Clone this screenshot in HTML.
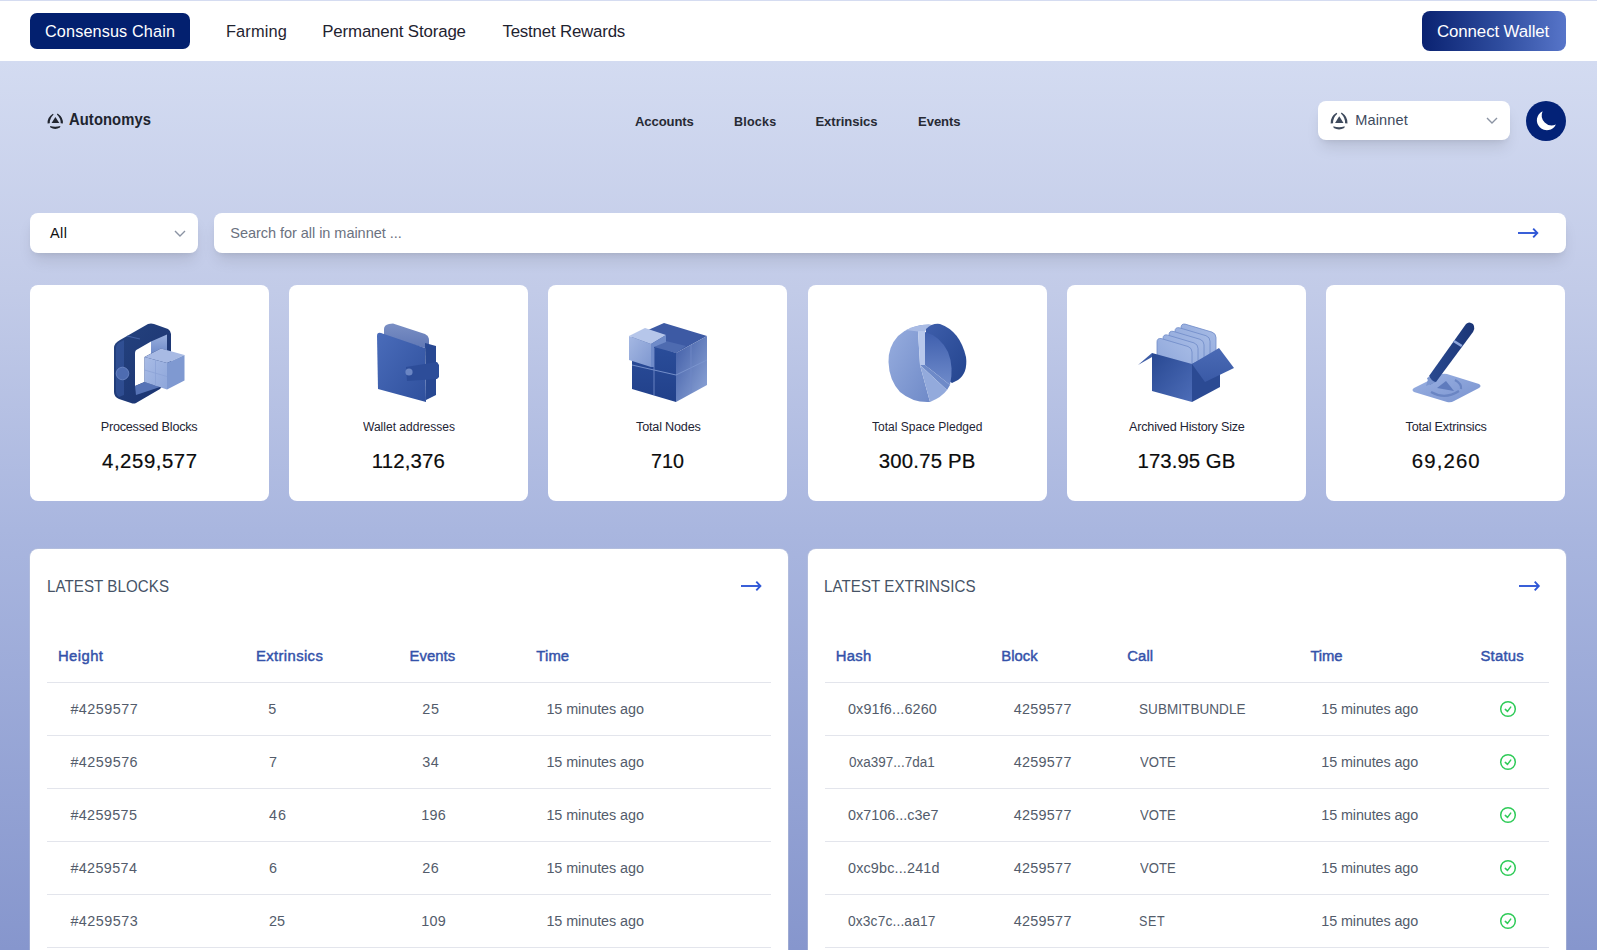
<!DOCTYPE html>
<html><head><meta charset="utf-8"><title>Autonomys Explorer</title>
<style>
*{margin:0;padding:0;box-sizing:border-box}
html,body{width:1597px;height:950px;overflow:hidden}
body{position:relative;font-family:"Liberation Sans",sans-serif;
 background:linear-gradient(180deg,#d3dbf1 0px,#d3dbf1 61px,#c2cbe8 290px,#a9b6df 530px,#8696cd 950px)}
.abs{position:absolute}
.tx{position:absolute;white-space:nowrap}
.ic{position:absolute;overflow:visible}
.topline{left:0;top:0;width:1597px;height:1px;background:#d5dcf1}
.nav{left:0;top:1px;width:1597px;height:60px;background:#fff}
.btn0{left:30px;top:13px;width:160px;height:36px;border-radius:7px;background:#03206f}
.cw{left:1422px;top:11px;width:144px;height:40px;border-radius:8px;background:linear-gradient(90deg,#0a2271 0%,#2f4d9f 55%,#5775c9 100%)}
.sel{background:#fff;border-radius:8px;box-shadow:0 10px 15px -3px rgba(0,0,0,0.1),0 4px 6px -4px rgba(0,0,0,0.1)}
.moon{left:1526px;top:101px;width:40px;height:40px;border-radius:50%;background:#032277}
.card{top:285px;width:239.17px;height:216px;background:#fff;border-radius:8px}
.panel{top:549px;width:758px;height:420px;background:#fff;border-radius:8px;box-shadow:0 0 0 1px rgba(200,205,220,0.35)}
.hl{height:1px;background:#e3e5ec}
</style></head>
<body>
<div class="abs topline"></div><div class="abs nav"></div>
<div class="abs btn0"></div><div class="abs cw"></div>
<svg class="ic" style="left:47px;top:113px" width="16" height="16" viewBox="0 0 16 16">
<path d="M0.6,10.4 Q0.2,4.2 5.9,0.7 L6.6,1.6 Q2.6,5.2 2.8,10.3 Z" fill="#20242e"/>
<path d="M15.9,10.4 Q16.3,4.2 10.6,0.4 L9.9,1.4 Q13.9,5.2 13.7,10.3 Z" fill="#20242e"/>
<path d="M3.0,13.0 Q8.2,14.6 13.4,13.0 L13.0,14.6 Q8.2,17.3 3.4,14.6 Z" fill="#20242e"/>
<path d="M8.4,3.9 L12.3,10.0 L4.6,10.0 Z" fill="#20242e"/>
</svg>
<div class="abs sel" style="left:1318px;top:101px;width:192px;height:39px"></div>
<svg class="ic" style="left:1330px;top:111.5px" width="17.6" height="17.6" viewBox="0 0 16 16">
<path d="M0.6,10.4 Q0.2,4.2 5.9,0.7 L6.6,1.6 Q2.6,5.2 2.8,10.3 Z" fill="#3e4a5d"/>
<path d="M15.9,10.4 Q16.3,4.2 10.6,0.4 L9.9,1.4 Q13.9,5.2 13.7,10.3 Z" fill="#3e4a5d"/>
<path d="M3.0,13.0 Q8.2,14.6 13.4,13.0 L13.0,14.6 Q8.2,17.3 3.4,14.6 Z" fill="#3e4a5d"/>
<path d="M8.4,3.9 L12.3,10.0 L4.6,10.0 Z" fill="#3e4a5d"/>
</svg>
<svg class="ic" style="left:1485px;top:116.3px" width="14" height="9.0" viewBox="1485 116.3 14 9.0">
<path d="M1487,118.3 L1492.0,123.3 L1497,118.3" stroke="#8b93a3" stroke-width="1.4" fill="none"/>
</svg>
<div class="abs moon"></div>
<svg class="ic" style="left:1526px;top:101px" width="40" height="40" viewBox="0 0 40 40">
<path d="M29.9,23.5 A10.1,10.1 0 0 1 16.6,10.2 A10,10 0 1 0 29.9,23.5 Z" fill="#ffffff"/></svg>
<div class="abs sel" style="left:30px;top:213px;width:168px;height:40px"></div>
<svg class="ic" style="left:173px;top:229.3px" width="14" height="9.0" viewBox="173 229.3 14 9.0">
<path d="M175,231.3 L180.0,236.3 L185,231.3" stroke="#8b93a3" stroke-width="1.4" fill="none"/>
</svg>
<div class="abs sel" style="left:214px;top:213px;width:1352px;height:40px"></div>
<svg class="ic" style="left:1517px;top:226.6px" width="21.5" height="12" viewBox="1517 226.6 21.5 12">
<path d="M1518,232.6 L1536.5,232.6" stroke="#2f57d6" stroke-width="1.9" fill="none"/>
<path d="M1533.2,228.29999999999998 L1537.3,232.6 L1533.2,236.9" stroke="#2f57d6" stroke-width="1.9" fill="none" stroke-linejoin="miter"/>
</svg>
<div class="abs card" style="left:30.00px"></div>
<div class="abs card" style="left:289.17px"></div>
<div class="abs card" style="left:548.33px"></div>
<div class="abs card" style="left:807.50px"></div>
<div class="abs card" style="left:1066.67px"></div>
<div class="abs card" style="left:1325.83px"></div>
<svg class="ic" style="left:105px;top:315px" width="90" height="95" viewBox="0 0 90 95"><defs><linearGradient id="g1a" x1="0" y1="0" x2="1" y2="0"><stop offset="0" stop-color="#2f51a0"/><stop offset="1" stop-color="#1b3473"/></linearGradient><linearGradient id="g1b" x1="0" y1="0" x2="0" y2="1"><stop offset="0" stop-color="#9ab0de"/><stop offset="1" stop-color="#6f8bc9"/></linearGradient><linearGradient id="g1c" x1="0" y1="0" x2="1" y2="1"><stop offset="0" stop-color="#a9bce6"/><stop offset="1" stop-color="#8ea6da"/></linearGradient><linearGradient id="g1d" x1="0" y1="0" x2="1" y2="1"><stop offset="0" stop-color="#25437f"/><stop offset="1" stop-color="#1a3270"/></linearGradient></defs><path d="M15,25 L43,9 Q46,8 49,9 L63,14 Q66,16 66,19 L66,60 L55,74 L31,88 Q29,89 26,88 L14,84 Q9,82 9,77 L9,33 Q9,28 15,25 Z" fill="url(#g1d)"/><path d="M11,33 Q11,29 15,27 L19,25 L19,80 L14,82 Q11,80 11,77 Z" fill="#3a5ba6" opacity="0.55"/><path d="M22,21 L35,24" stroke="#4d6bb0" stroke-width="1.2" opacity="0.8"/><path d="M30,38 Q30,35 33,34 L46,26.5 L46,38.6 L39.5,42 L39.5,67 L30,71 Z" fill="#ffffff"/><path d="M46,26.5 L62,19.5 L62,35.2 L56,33.5 L46,38.6 Z" fill="url(#g1b)"/><path d="M30,71 L39.5,67 L55,72 L31,80 Z" fill="#5673b6"/><circle cx="17.5" cy="58.5" r="6.3" fill="#4e6cb1" stroke="#6f89c6" stroke-width="0.8"/><path d="M39.5,42 L56,33.5 L79.5,40 L62,48 Z" fill="#a8bae4"/><path d="M39.5,42 L62,48 L62,74.5 L39.5,67 Z" fill="url(#g1c)"/><path d="M62,48 L79.5,40 L79.5,65.5 L62,74.5 Z" fill="#7f99d1"/><path d="M50.5,45 L50.5,71 M39.5,55 L62,61.5" stroke="#8aa1d6" stroke-width="0.7" fill="none"/></svg>
<svg class="ic" style="left:365px;top:315px" width="90" height="95" viewBox="0 0 90 95"><defs><linearGradient id="g2a" x1="0" y1="0" x2="1" y2="1"><stop offset="0" stop-color="#4a6cba"/><stop offset="1" stop-color="#2f509d"/></linearGradient><linearGradient id="g2b" x1="0" y1="0" x2="0" y2="1"><stop offset="0" stop-color="#7a8fc4"/><stop offset="1" stop-color="#5f77b5"/></linearGradient></defs><path d="M19,14 Q19,10 24,9 L28,8.5 L60,19 Q64,21 64,25 L64,34 L19,22 Z" fill="url(#g2b)"/><path d="M60,28 L71,31 L71,80 L61,85 Z" fill="#284892"/><path d="M12,21 Q12,17 16,18 L60,33 L61,87 L13,74 Z" fill="url(#g2a)"/><path d="M41,52 L72,47 L74,50 L74,62 L72,64 L42,66 Z" fill="#2d4d99"/><circle cx="44" cy="57" r="3.6" fill="#6b86c4"/></svg>
<svg class="ic" style="left:620px;top:315px" width="95" height="95" viewBox="0 0 95 95"><defs><linearGradient id="g3a" x1="0" y1="0" x2="0" y2="1"><stop offset="0" stop-color="#2c4f9c"/><stop offset="1" stop-color="#21408a"/></linearGradient><linearGradient id="g3b" x1="0" y1="0" x2="1" y2="1"><stop offset="0" stop-color="#3f5ca6"/><stop offset="1" stop-color="#90a7d8"/></linearGradient><linearGradient id="g3c" x1="0" y1="0" x2="1" y2="1"><stop offset="0" stop-color="#a5b8e3"/><stop offset="1" stop-color="#7f98d0"/></linearGradient><linearGradient id="g3d" x1="0" y1="0" x2="1" y2="1"><stop offset="0" stop-color="#2a4b97"/><stop offset="1" stop-color="#3c5aa3"/></linearGradient></defs><path d="M12,22 L44,8 L87,21 L56,38 Z" fill="#3d5aa4"/><path d="M12,22 L56,38 L56,87 L12,74 Z" fill="url(#g3a)"/><path d="M56,38 L87,21 L87,70 L56,87 Z" fill="url(#g3b)"/><path d="M34,32 L46,26 L66,31 L56,38 Z" fill="#4e6bb0"/><path d="M9,21 L25,13 L46,20 L31,29 Z" fill="#b6c6ea"/><path d="M9,21 L31,29 L31,52 L9,45 Z" fill="url(#g3c)"/><path d="M31,29 L46,20 L46,27 L34,32 L34,52 L31,52 Z" fill="#6f8bc9"/><path d="M12,50 L56,60 L87,45" stroke="#7d96cf" stroke-width="0.9" fill="none"/><path d="M34,33 L34,80 M71,30 L71,78" stroke="#6f89c6" stroke-width="0.9" fill="none"/></svg>
<svg class="ic" style="left:880px;top:315px" width="95" height="95" viewBox="0 0 95 95"><defs><linearGradient id="g4a" x1="0" y1="0" x2="1" y2="1"><stop offset="0" stop-color="#98aedf"/><stop offset="1" stop-color="#6f8ac8"/></linearGradient><linearGradient id="g4b" x1="0" y1="0" x2="1" y2="1"><stop offset="0" stop-color="#3e5eab"/><stop offset="1" stop-color="#23448e"/></linearGradient><linearGradient id="g4c" x1="0" y1="0" x2="0" y2="1"><stop offset="0" stop-color="#3f5fae"/><stop offset="1" stop-color="#6f8bca"/></linearGradient></defs><path d="M38,16 L50,9.5 Q31,9 18,21 Q8,32 8.5,47 Q9,65 20,77 Q33,88 50,87 L40,50 Z" fill="url(#g4a)"/><path d="M26,15 Q37,9.5 50,9.5 Q53,9.5 51,11.5 L45,16 L38,16.5 Z" fill="#a9bbe4"/><path d="M38,16 L45,16 L45,50 L40,50 Z" fill="#b8c8ec"/><path d="M46,14 Q52,8 60,9 Q80,16 86,42 Q88,58 78,65 L72,68 L45,50 Z" fill="url(#g4b)"/><path d="M45,17 Q60,21 68,37 Q74,52 70,70 L45,50 Z" fill="url(#g4c)"/><path d="M40,50 L45,50 L70,70 L67,75 Z" fill="#6e8ac8"/><path d="M40,50 L67,75 Q62,82 50,87 Z" fill="#93aadc"/></svg>
<svg class="ic" style="left:1135px;top:315px" width="105" height="95" viewBox="0 0 105 95"><defs><linearGradient id="g5a" x1="0" y1="0" x2="1" y2="1"><stop offset="0" stop-color="#284892"/><stop offset="1" stop-color="#4d6db8"/></linearGradient><linearGradient id="g5b" x1="0" y1="1" x2="1" y2="0"><stop offset="0" stop-color="#8aa3d9"/><stop offset="1" stop-color="#a9bde6"/></linearGradient><linearGradient id="g5f" x1="0" y1="0" x2="0" y2="1"><stop offset="0" stop-color="#4a6ab5"/><stop offset="1" stop-color="#3a5aa6"/></linearGradient></defs><path d="M46.0,45.6 L46.0,12.6 Q46.0,8.6 50.0,9.1 L77.0,17.1 Q81.0,18.6 81.0,22.6 L81.0,45.6 Z" fill="url(#g5b)" stroke="#6f8ac8" stroke-width="0.8"/><path d="M40.0,49.2 L40.0,16.2 Q40.0,12.2 44.0,12.7 L71.0,20.7 Q75.0,22.2 75.0,26.2 L75.0,49.2 Z" fill="url(#g5b)" stroke="#6f8ac8" stroke-width="0.8"/><path d="M34.0,52.8 L34.0,19.8 Q34.0,15.8 38.0,16.3 L65.0,24.3 Q69.0,25.8 69.0,29.8 L69.0,52.8 Z" fill="url(#g5b)" stroke="#6f8ac8" stroke-width="0.8"/><path d="M28.0,56.4 L28.0,23.4 Q28.0,19.4 32.0,19.9 L59.0,27.9 Q63.0,29.4 63.0,33.4 L63.0,56.4 Z" fill="url(#g5b)" stroke="#6f8ac8" stroke-width="0.8"/><path d="M22.0,60.0 L22.0,27.0 Q22.0,23.0 26.0,23.5 L53.0,31.5 Q57.0,33.0 57.0,37.0 L57.0,60.0 Z" fill="url(#g5b)" stroke="#6f8ac8" stroke-width="0.8"/><path d="M17,38 L57,49 L57,87 L17,76 Z" fill="url(#g5a)"/><path d="M57,49 L85,35 L85,72 L57,87 Z" fill="#2b4a93"/><path d="M57,49 L84,33 L99,53 L70,67 Z" fill="url(#g5f)"/><path d="M3,50 L17,38 L17,42 Z" fill="#3d5ca6"/></svg>
<svg class="ic" style="left:1400px;top:315px" width="95" height="95" viewBox="0 0 95 95"><defs><linearGradient id="g6a" x1="0" y1="0" x2="1" y2="1"><stop offset="0" stop-color="#9bb1e2"/><stop offset="1" stop-color="#7a94d0"/></linearGradient><linearGradient id="g6p" x1="0" y1="0" x2="1" y2="0"><stop offset="0" stop-color="#2a4a90"/><stop offset="1" stop-color="#1b3576"/></linearGradient></defs><path d="M14,73 Q11,75 14,77 L47,87 Q51,88 54,86 L79,73 Q82,71 79,69 L47,59 Q43,58 40,60 Z" fill="url(#g6a)"/><path d="M37,73 L46,66 L54,76 Z" fill="#5f7bbd"/><path d="M31,77 Q45,85 59,76" stroke="#6a85c3" stroke-width="2.2" fill="none"/><path d="M55,65 Q62,69 61,74" stroke="#6a85c3" stroke-width="2.2" fill="none"/><path d="M27,63 Q33,60 35,67 L30,70 Z" fill="#6d88c6"/><path d="M29,61 L66,9 Q69,6 73,9 L74,11 Q75,14 73,17 L36,67 Q32,67 29,61 Z" fill="url(#g6p)"/><path d="M53,27 L61,32 L62.5,30 L54.5,25 Z" fill="#8ea6db"/><path d="M26,71 L29,61 Q32,67 36,67 Z" fill="#7d97d0"/></svg>
<div class="abs panel" style="left:30px"></div><div class="abs panel" style="left:808px"></div>
<svg class="ic" style="left:740.2px;top:580px" width="21.59999999999991" height="12" viewBox="740.2 580 21.59999999999991 12">
<path d="M741.2,586 L759.8,586" stroke="#2f57d6" stroke-width="1.9" fill="none"/>
<path d="M756.5,581.7 L760.5999999999999,586 L756.5,590.3" stroke="#2f57d6" stroke-width="1.9" fill="none" stroke-linejoin="miter"/>
</svg>
<svg class="ic" style="left:1518px;top:580px" width="22" height="12" viewBox="1518 580 22 12">
<path d="M1519,586 L1538,586" stroke="#2f57d6" stroke-width="1.9" fill="none"/>
<path d="M1534.7,581.7 L1538.8,586 L1534.7,590.3" stroke="#2f57d6" stroke-width="1.9" fill="none" stroke-linejoin="miter"/>
</svg>
<div class="abs hl" style="left:47px;top:682px;width:724px"></div>
<div class="abs hl" style="left:825px;top:682px;width:724px"></div>
<div class="abs hl" style="left:47px;top:735px;width:724px"></div>
<div class="abs hl" style="left:825px;top:735px;width:724px"></div>
<div class="abs hl" style="left:47px;top:788px;width:724px"></div>
<div class="abs hl" style="left:825px;top:788px;width:724px"></div>
<div class="abs hl" style="left:47px;top:841px;width:724px"></div>
<div class="abs hl" style="left:825px;top:841px;width:724px"></div>
<div class="abs hl" style="left:47px;top:894px;width:724px"></div>
<div class="abs hl" style="left:825px;top:894px;width:724px"></div>
<div class="abs hl" style="left:47px;top:947px;width:724px"></div>
<div class="abs hl" style="left:825px;top:947px;width:724px"></div>
<svg class="ic" style="left:1499px;top:700px" width="18" height="18" viewBox="1499 700 18 18">
<circle cx="1508" cy="709" r="7.3" stroke="#2fcb58" stroke-width="1.5" fill="none"/>
<path d="M1505.3,709.4 L1507.5,711.4 L1510.7,707.1" stroke="#2fcb58" stroke-width="1.5" fill="none" stroke-linecap="round" stroke-linejoin="round"/>
</svg>
<svg class="ic" style="left:1499px;top:753px" width="18" height="18" viewBox="1499 753 18 18">
<circle cx="1508" cy="762" r="7.3" stroke="#2fcb58" stroke-width="1.5" fill="none"/>
<path d="M1505.3,762.4 L1507.5,764.4 L1510.7,760.1" stroke="#2fcb58" stroke-width="1.5" fill="none" stroke-linecap="round" stroke-linejoin="round"/>
</svg>
<svg class="ic" style="left:1499px;top:806px" width="18" height="18" viewBox="1499 806 18 18">
<circle cx="1508" cy="815" r="7.3" stroke="#2fcb58" stroke-width="1.5" fill="none"/>
<path d="M1505.3,815.4 L1507.5,817.4 L1510.7,813.1" stroke="#2fcb58" stroke-width="1.5" fill="none" stroke-linecap="round" stroke-linejoin="round"/>
</svg>
<svg class="ic" style="left:1499px;top:859px" width="18" height="18" viewBox="1499 859 18 18">
<circle cx="1508" cy="868" r="7.3" stroke="#2fcb58" stroke-width="1.5" fill="none"/>
<path d="M1505.3,868.4 L1507.5,870.4 L1510.7,866.1" stroke="#2fcb58" stroke-width="1.5" fill="none" stroke-linecap="round" stroke-linejoin="round"/>
</svg>
<svg class="ic" style="left:1499px;top:912px" width="18" height="18" viewBox="1499 912 18 18">
<circle cx="1508" cy="921" r="7.3" stroke="#2fcb58" stroke-width="1.5" fill="none"/>
<path d="M1505.3,921.4 L1507.5,923.4 L1510.7,919.1" stroke="#2fcb58" stroke-width="1.5" fill="none" stroke-linecap="round" stroke-linejoin="round"/>
</svg>
<div class="tx" id="nav0" style="left:45.08px;top:23.72px;font-size:16.86px;line-height:16.86px;letter-spacing:0.130px;transform:scaleX(0.9630);transform-origin:0 0;font-weight:400;color:#ffffff">Consensus Chain</div>
<div class="tx" id="nav1" style="left:226.23px;top:23.88px;font-size:16.86px;line-height:16.86px;letter-spacing:0.128px;transform:scaleX(0.9710);transform-origin:0 0;font-weight:400;color:#1f2330">Farming</div>
<div class="tx" id="nav2" style="left:322.23px;top:23.88px;font-size:16.86px;line-height:16.86px;letter-spacing:-0.152px;font-weight:400;color:#1f2330">Permanent Storage</div>
<div class="tx" id="nav3" style="left:502.46px;top:23.88px;font-size:16.86px;line-height:16.86px;letter-spacing:-0.196px;font-weight:400;color:#1f2330">Testnet Rewards</div>
<div class="tx" id="cw" style="left:1436.99px;top:24.15px;font-size:16.86px;line-height:16.86px;letter-spacing:-0.106px;font-weight:400;color:#ffffff">Connect Wallet</div>
<div class="tx" id="logo" style="left:68.76px;top:111.89px;font-size:15.84px;line-height:15.84px;letter-spacing:0.087px;transform:scaleX(0.9341);transform-origin:0 0;font-weight:700;color:#20242e">Autonomys</div>
<div class="tx" id="h0" style="left:635.00px;top:114.58px;font-size:13.08px;line-height:13.08px;letter-spacing:-0.110px;font-weight:700;color:#272a34">Accounts</div>
<div class="tx" id="h1" style="left:733.80px;top:114.72px;font-size:13.08px;line-height:13.08px;letter-spacing:0.224px;transform:scaleX(0.9574);transform-origin:0 0;font-weight:700;color:#272a34">Blocks</div>
<div class="tx" id="h2" style="left:815.45px;top:114.58px;font-size:13.08px;line-height:13.08px;letter-spacing:-0.052px;font-weight:700;color:#272a34">Extrinsics</div>
<div class="tx" id="h3" style="left:918.07px;top:114.58px;font-size:13.08px;line-height:13.08px;letter-spacing:-0.075px;font-weight:700;color:#272a34">Events</div>
<div class="tx" id="mainnet" style="left:1355.23px;top:112.69px;font-size:14.54px;line-height:14.54px;letter-spacing:0.142px;font-weight:400;color:#3e4a5d">Mainnet</div>
<div class="tx" id="all" style="left:50.00px;top:225.69px;font-size:14.54px;line-height:14.54px;letter-spacing:0.397px;font-weight:400;color:#111111">All</div>
<div class="tx" id="ph" style="left:230.30px;top:225.69px;font-size:14.54px;line-height:14.54px;letter-spacing:-0.052px;font-weight:400;color:#6b7280">Search for all in mainnet ...</div>
<div class="tx" id="cl0" style="left:100.74px;top:420.89px;font-size:12.65px;line-height:12.65px;letter-spacing:-0.235px;font-weight:400;color:#1e2535">Processed Blocks</div>
<div class="tx" id="cv0" style="left:102.00px;top:451.23px;font-size:20.35px;line-height:20.35px;letter-spacing:0.571px;font-weight:400;color:#0b0b0b;-webkit-text-stroke:0.2px #0b0b0b">4,259,577</div>
<div class="tx" id="cl1" style="left:362.76px;top:420.89px;font-size:12.65px;line-height:12.65px;letter-spacing:0.000px;transform:scaleX(0.9526);transform-origin:0 0;font-weight:400;color:#1e2535">Wallet addresses</div>
<div class="tx" id="cv1" style="left:371.69px;top:451.23px;font-size:20.35px;line-height:20.35px;letter-spacing:0.172px;font-weight:400;color:#0b0b0b;-webkit-text-stroke:0.2px #0b0b0b">112,376</div>
<div class="tx" id="cl2" style="left:636.00px;top:420.89px;font-size:12.65px;line-height:12.65px;letter-spacing:-0.188px;font-weight:400;color:#1e2535">Total Nodes</div>
<div class="tx" id="cv2" style="left:650.98px;top:450.57px;font-size:20.35px;line-height:20.35px;letter-spacing:0.070px;transform:scaleX(0.9690);transform-origin:0 0;font-weight:400;color:#0b0b0b;-webkit-text-stroke:0.2px #0b0b0b">710</div>
<div class="tx" id="cl3" style="left:872.24px;top:420.89px;font-size:12.65px;line-height:12.65px;letter-spacing:0.008px;transform:scaleX(0.9509);transform-origin:0 0;font-weight:400;color:#1e2535">Total Space Pledged</div>
<div class="tx" id="cv3" style="left:878.76px;top:451.23px;font-size:20.35px;line-height:20.35px;letter-spacing:0.203px;font-weight:400;color:#0b0b0b;-webkit-text-stroke:0.2px #0b0b0b">300.75 PB</div>
<div class="tx" id="cl4" style="left:1129.00px;top:420.89px;font-size:12.65px;line-height:12.65px;letter-spacing:-0.212px;font-weight:400;color:#1e2535">Archived History Size</div>
<div class="tx" id="cv4" style="left:1137.61px;top:451.23px;font-size:20.35px;line-height:20.35px;letter-spacing:0.047px;font-weight:400;color:#0b0b0b;-webkit-text-stroke:0.2px #0b0b0b">173.95 GB</div>
<div class="tx" id="cl5" style="left:1405.52px;top:420.89px;font-size:12.65px;line-height:12.65px;letter-spacing:-0.194px;font-weight:400;color:#1e2535">Total Extrinsics</div>
<div class="tx" id="cv5" style="left:1411.77px;top:451.23px;font-size:20.35px;line-height:20.35px;letter-spacing:1.134px;font-weight:400;color:#0b0b0b;-webkit-text-stroke:0.2px #0b0b0b">69,260</div>
<div class="tx" id="pt0" style="left:46.52px;top:578.20px;font-size:17.01px;line-height:17.01px;letter-spacing:0.058px;transform:scaleX(0.8904);transform-origin:0 0;font-weight:400;color:#465366">LATEST BLOCKS</div>
<div class="tx" id="pt1" style="left:824.00px;top:578.20px;font-size:17.01px;line-height:17.01px;letter-spacing:0.044px;transform:scaleX(0.8908);transform-origin:0 0;font-weight:400;color:#465366">LATEST EXTRINSICS</div>
<div class="tx" id="th0" style="left:57.98px;top:648.65px;font-size:14.83px;line-height:14.83px;letter-spacing:0.426px;font-weight:400;color:#3452aa;-webkit-text-stroke:0.45px #3452aa">Height</div>
<div class="tx" id="th1" style="left:256.00px;top:648.65px;font-size:14.83px;line-height:14.83px;letter-spacing:0.375px;font-weight:400;color:#3452aa;-webkit-text-stroke:0.45px #3452aa">Extrinsics</div>
<div class="tx" id="th2" style="left:409.51px;top:648.65px;font-size:14.83px;line-height:14.83px;letter-spacing:0.055px;font-weight:400;color:#3452aa;-webkit-text-stroke:0.45px #3452aa">Events</div>
<div class="tx" id="th3" style="left:536.34px;top:648.65px;font-size:14.83px;line-height:14.83px;letter-spacing:0.127px;font-weight:400;color:#3452aa;-webkit-text-stroke:0.45px #3452aa">Time</div>
<div class="tx" id="th4" style="left:835.83px;top:648.65px;font-size:14.83px;line-height:14.83px;letter-spacing:0.276px;font-weight:400;color:#3452aa;-webkit-text-stroke:0.45px #3452aa">Hash</div>
<div class="tx" id="th5" style="left:1001.17px;top:648.65px;font-size:14.83px;line-height:14.83px;letter-spacing:0.089px;font-weight:400;color:#3452aa;-webkit-text-stroke:0.45px #3452aa">Block</div>
<div class="tx" id="th6" style="left:1127.13px;top:648.65px;font-size:14.83px;line-height:14.83px;letter-spacing:0.165px;font-weight:400;color:#3452aa;-webkit-text-stroke:0.45px #3452aa">Call</div>
<div class="tx" id="th7" style="left:1310.51px;top:648.65px;font-size:14.83px;line-height:14.83px;letter-spacing:-0.156px;font-weight:400;color:#3452aa;-webkit-text-stroke:0.45px #3452aa">Time</div>
<div class="tx" id="th8" style="left:1480.49px;top:648.65px;font-size:14.83px;line-height:14.83px;letter-spacing:0.249px;font-weight:400;color:#3452aa;-webkit-text-stroke:0.45px #3452aa">Status</div>
<div class="tx" id="r0a" style="left:70.38px;top:701.99px;font-size:14.39px;line-height:14.39px;letter-spacing:0.480px;font-weight:400;color:#535c6b">#4259577</div>
<div class="tx" id="r0b" style="left:268.22px;top:701.99px;font-size:14.39px;line-height:14.39px;letter-spacing:0.000px;font-weight:400;color:#535c6b">5</div>
<div class="tx" id="r0c" style="left:422.15px;top:701.99px;font-size:14.39px;line-height:14.39px;letter-spacing:0.785px;font-weight:400;color:#535c6b">25</div>
<div class="tx" id="r0d" style="left:546.38px;top:701.99px;font-size:14.39px;line-height:14.39px;letter-spacing:-0.052px;font-weight:400;color:#535c6b">15 minutes ago</div>
<div class="tx" id="s0a" style="left:847.99px;top:701.99px;font-size:14.39px;line-height:14.39px;letter-spacing:0.145px;font-weight:400;color:#535c6b">0x91f6...6260</div>
<div class="tx" id="s0b" style="left:1013.69px;top:701.99px;font-size:14.39px;line-height:14.39px;letter-spacing:0.289px;font-weight:400;color:#535c6b">4259577</div>
<div class="tx" id="s0c" style="left:1138.58px;top:701.92px;font-size:14.39px;line-height:14.39px;letter-spacing:0.051px;transform:scaleX(0.9408);transform-origin:0 0;font-weight:400;color:#535c6b">SUBMITBUNDLE</div>
<div class="tx" id="s0d" style="left:1321.31px;top:701.99px;font-size:14.39px;line-height:14.39px;letter-spacing:-0.112px;font-weight:400;color:#535c6b">15 minutes ago</div>
<div class="tx" id="r1a" style="left:70.38px;top:754.99px;font-size:14.39px;line-height:14.39px;letter-spacing:0.468px;font-weight:400;color:#535c6b">#4259576</div>
<div class="tx" id="r1b" style="left:268.92px;top:754.92px;font-size:14.39px;line-height:14.39px;letter-spacing:0.000px;font-weight:400;color:#535c6b">7</div>
<div class="tx" id="r1c" style="left:422.15px;top:754.99px;font-size:14.39px;line-height:14.39px;letter-spacing:0.625px;font-weight:400;color:#535c6b">34</div>
<div class="tx" id="r1d" style="left:546.38px;top:754.99px;font-size:14.39px;line-height:14.39px;letter-spacing:-0.052px;font-weight:400;color:#535c6b">15 minutes ago</div>
<div class="tx" id="s1a" style="left:848.76px;top:754.92px;font-size:14.39px;line-height:14.39px;letter-spacing:0.035px;transform:scaleX(0.9361);transform-origin:0 0;font-weight:400;color:#535c6b">0xa397...7da1</div>
<div class="tx" id="s1b" style="left:1013.69px;top:754.99px;font-size:14.39px;line-height:14.39px;letter-spacing:0.289px;font-weight:400;color:#535c6b">4259577</div>
<div class="tx" id="s1c" style="left:1139.98px;top:754.92px;font-size:14.39px;line-height:14.39px;letter-spacing:0.047px;transform:scaleX(0.9105);transform-origin:0 0;font-weight:400;color:#535c6b">VOTE</div>
<div class="tx" id="s1d" style="left:1321.31px;top:754.99px;font-size:14.39px;line-height:14.39px;letter-spacing:-0.112px;font-weight:400;color:#535c6b">15 minutes ago</div>
<div class="tx" id="r2a" style="left:70.38px;top:807.99px;font-size:14.39px;line-height:14.39px;letter-spacing:0.380px;font-weight:400;color:#535c6b">#4259575</div>
<div class="tx" id="r2b" style="left:268.92px;top:807.99px;font-size:14.39px;line-height:14.39px;letter-spacing:1.015px;font-weight:400;color:#535c6b">46</div>
<div class="tx" id="r2c" style="left:421.15px;top:807.99px;font-size:14.39px;line-height:14.39px;letter-spacing:0.355px;font-weight:400;color:#535c6b">196</div>
<div class="tx" id="r2d" style="left:546.38px;top:807.99px;font-size:14.39px;line-height:14.39px;letter-spacing:-0.052px;font-weight:400;color:#535c6b">15 minutes ago</div>
<div class="tx" id="s2a" style="left:847.99px;top:807.99px;font-size:14.39px;line-height:14.39px;letter-spacing:0.013px;font-weight:400;color:#535c6b">0x7106...c3e7</div>
<div class="tx" id="s2b" style="left:1013.69px;top:807.99px;font-size:14.39px;line-height:14.39px;letter-spacing:0.289px;font-weight:400;color:#535c6b">4259577</div>
<div class="tx" id="s2c" style="left:1139.98px;top:807.92px;font-size:14.39px;line-height:14.39px;letter-spacing:0.047px;transform:scaleX(0.9105);transform-origin:0 0;font-weight:400;color:#535c6b">VOTE</div>
<div class="tx" id="s2d" style="left:1321.31px;top:807.99px;font-size:14.39px;line-height:14.39px;letter-spacing:-0.112px;font-weight:400;color:#535c6b">15 minutes ago</div>
<div class="tx" id="r3a" style="left:70.38px;top:860.99px;font-size:14.39px;line-height:14.39px;letter-spacing:0.380px;font-weight:400;color:#535c6b">#4259574</div>
<div class="tx" id="r3b" style="left:268.92px;top:860.99px;font-size:14.39px;line-height:14.39px;letter-spacing:0.000px;font-weight:400;color:#535c6b">6</div>
<div class="tx" id="r3c" style="left:422.15px;top:860.99px;font-size:14.39px;line-height:14.39px;letter-spacing:0.625px;font-weight:400;color:#535c6b">26</div>
<div class="tx" id="r3d" style="left:546.38px;top:860.99px;font-size:14.39px;line-height:14.39px;letter-spacing:-0.052px;font-weight:400;color:#535c6b">15 minutes ago</div>
<div class="tx" id="s3a" style="left:847.99px;top:860.99px;font-size:14.39px;line-height:14.39px;letter-spacing:0.164px;font-weight:400;color:#535c6b">0xc9bc...241d</div>
<div class="tx" id="s3b" style="left:1013.69px;top:860.99px;font-size:14.39px;line-height:14.39px;letter-spacing:0.289px;font-weight:400;color:#535c6b">4259577</div>
<div class="tx" id="s3c" style="left:1139.98px;top:860.92px;font-size:14.39px;line-height:14.39px;letter-spacing:0.047px;transform:scaleX(0.9105);transform-origin:0 0;font-weight:400;color:#535c6b">VOTE</div>
<div class="tx" id="s3d" style="left:1321.31px;top:860.99px;font-size:14.39px;line-height:14.39px;letter-spacing:-0.112px;font-weight:400;color:#535c6b">15 minutes ago</div>
<div class="tx" id="r4a" style="left:70.38px;top:913.99px;font-size:14.39px;line-height:14.39px;letter-spacing:0.480px;font-weight:400;color:#535c6b">#4259573</div>
<div class="tx" id="r4b" style="left:268.92px;top:913.99px;font-size:14.39px;line-height:14.39px;letter-spacing:0.085px;font-weight:400;color:#535c6b">25</div>
<div class="tx" id="r4c" style="left:421.15px;top:913.99px;font-size:14.39px;line-height:14.39px;letter-spacing:0.355px;font-weight:400;color:#535c6b">109</div>
<div class="tx" id="r4d" style="left:546.38px;top:913.99px;font-size:14.39px;line-height:14.39px;letter-spacing:-0.052px;font-weight:400;color:#535c6b">15 minutes ago</div>
<div class="tx" id="s4a" style="left:847.99px;top:913.99px;font-size:14.39px;line-height:14.39px;letter-spacing:0.140px;transform:scaleX(0.9585);transform-origin:0 0;font-weight:400;color:#535c6b">0x3c7c...aa17</div>
<div class="tx" id="s4b" style="left:1013.69px;top:913.99px;font-size:14.39px;line-height:14.39px;letter-spacing:0.289px;font-weight:400;color:#535c6b">4259577</div>
<div class="tx" id="s4c" style="left:1138.58px;top:913.92px;font-size:14.39px;line-height:14.39px;letter-spacing:0.770px;transform:scaleX(0.8731);transform-origin:0 0;font-weight:400;color:#535c6b">SET</div>
<div class="tx" id="s4d" style="left:1321.31px;top:913.99px;font-size:14.39px;line-height:14.39px;letter-spacing:-0.112px;font-weight:400;color:#535c6b">15 minutes ago</div>
</body></html>
